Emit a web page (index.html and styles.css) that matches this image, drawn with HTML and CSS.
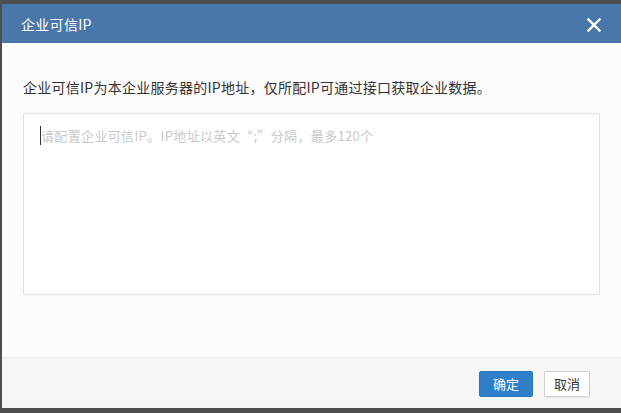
FILE: index.html
```html
<!DOCTYPE html>
<html lang="zh-CN">
<head>
<meta charset="utf-8">
<title>企业可信IP</title>
<link rel="stylesheet" href="styles.css">
</head>
<body>
<div class="dialog">
  <div class="dialog-header">
    <span class="dialog-title">企业可信IP</span>
    <span class="dialog-close" aria-label="关闭">
      <svg width="14" height="14" viewBox="0 0 14 14"><path d="M1.5 1.5L12.5 12.5M12.5 1.5L1.5 12.5" stroke="#fff" stroke-width="2.4" stroke-linecap="square" fill="none"/></svg>
    </span>
  </div>
  <div class="dialog-body">
    <p class="desc">企业可信IP为本企业服务器的IP地址，仅所配IP可通过接口获取企业数据。</p>
    <div class="ip-input">
      <span class="caret"></span><span class="placeholder">请配置企业可信IP。IP地址以英文“;”分隔，最多120个</span>
    </div>
  </div>
  <div class="dialog-footer">
    <button class="btn btn-primary">确定</button>
    <button class="btn btn-default">取消</button>
  </div>
</div>
</body>
</html>
```
FILE: styles.css
```css
html, body {
  margin: 0;
  padding: 0;
}
body {
  background: #4e4e4e;
  width: 621px;
  height: 413px;
  overflow: hidden;
  font-family: "Noto Sans CJK SC", "Noto Sans", sans-serif;
}
.dialog {
  margin: 4px 0 0 2px;
  width: 619px;
  height: 404px;
  display: flex;
  flex-direction: column;
  background: #fcfcfc;
}
.dialog-header {
  height: 39px;
  flex: none;
  background: #4a77aa;
  display: flex;
  align-items: center;
  justify-content: space-between;
  padding: 0 20px 0 19px;
}
.dialog-title {
  color: #fff;
  font-size: 14px;
  line-height: 20px;
  letter-spacing: 0.3px;
}
.dialog-close {
  display: flex;
  width: 14px;
  height: 14px;
  margin-top: 2px;
}
.dialog-body {
  flex: 1;
  padding: 34px 21px 0 21px;
}
.desc {
  margin: 0;
  font-size: 14px;
  line-height: 20px;
  color: #333;
  letter-spacing: 0.25px;
}
.ip-input {
  margin-top: 16px;
  border: 1px solid #e2e2e2;
  background: #fff;
  box-shadow: inset 0 1px 2px rgba(0,0,0,0.03);
  padding: 12px 16px;
  box-sizing: border-box;
  height: 182px;
  display: flex;
  align-items: flex-start;
}
.caret {
  width: 1px;
  height: 19px;
  background: #333;
}
.placeholder {
  font-size: 13px;
  line-height: 19px;
  color: #c9c9c9;
  letter-spacing: 0.35px;
}
.dialog-footer {
  flex: none;
  box-sizing: border-box;
  height: 51px;
  border-top: 1px solid #ececec;
  background: #f6f6f6;
  display: flex;
  justify-content: flex-end;
  align-items: flex-start;
  padding: 13px 31px 0 0;
  gap: 11px;
}
.btn {
  font-family: "Noto Sans CJK SC", "Noto Sans", sans-serif;
  font-size: 13px;
  height: 26px;
  line-height: 24px;
  padding: 0;
  border-radius: 2px;
  cursor: pointer;
}
.btn-primary {
  width: 54px;
  background: #2f7fc9;
  border: 1px solid #2b77bd;
  color: #fff;
}
.btn-default {
  width: 46px;
  background: #fff;
  border: 1px solid #d0d0d0;
  color: #333;
  box-shadow: 0 1px 1px rgba(0,0,0,0.06);
}
```
